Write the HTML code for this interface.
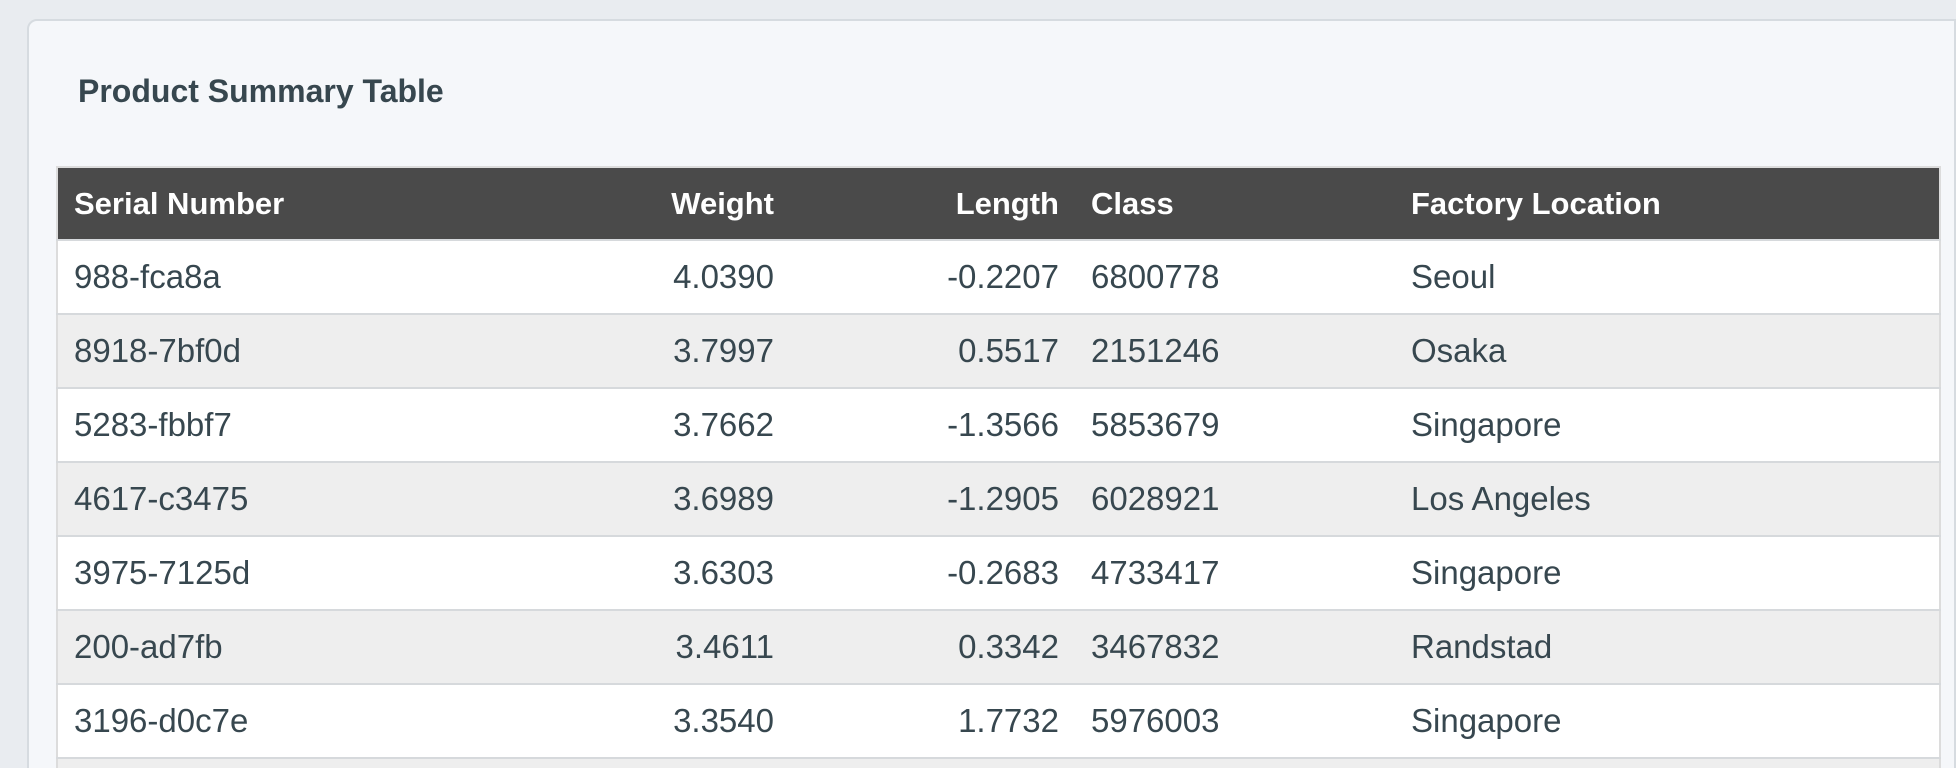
<!DOCTYPE html>
<html><head><meta charset="utf-8"><style>
html,body{margin:0;padding:0;width:1956px;height:768px;overflow:hidden;background:#e9ecf0;font-family:"Liberation Sans",sans-serif;}
#wrap{position:relative;width:1956px;height:768px;overflow:hidden;}
.card{position:absolute;left:27px;top:19px;width:1925px;height:747px;background:#f5f7fa;border:2px solid #d6dbe0;border-radius:10px 0 0 0;}
h1{position:absolute;left:78px;top:73px;margin:0;font-size:32px;font-weight:bold;color:#37474f;}
.tw{position:absolute;left:56px;top:166px;width:1885px;height:602px;overflow:hidden;}
table{width:1885px;border-collapse:collapse;border:2px solid #dcdcdc;table-layout:fixed;}
th{background:#4a4a4a;color:#fff;font-size:31px;font-weight:bold;height:71px;padding:0 16px;text-align:left;}
td{font-size:33px;color:#37474f;height:72px;padding:0 16px;border-top:2px solid #d6d9dc;}
tr:nth-child(even) td{background:#eeeeee;}
tr:nth-child(odd) td{background:#fff;}
.r{text-align:right;}
</style></head><body><div id="wrap">
<div class="card"></div>
<h1>Product Summary Table</h1>
<div class="tw">
<table>
<colgroup><col style="width:500px"><col style="width:233px"><col style="width:285px"><col style="width:320px"><col></colgroup>
<thead><tr><th>Serial Number</th><th class="r">Weight</th><th class="r">Length</th><th>Class</th><th>Factory Location</th></tr></thead>
<tbody>
<tr><td>988-fca8a</td><td class="r">4.0390</td><td class="r">-0.2207</td><td>6800778</td><td>Seoul</td></tr>
<tr><td>8918-7bf0d</td><td class="r">3.7997</td><td class="r">0.5517</td><td>2151246</td><td>Osaka</td></tr>
<tr><td>5283-fbbf7</td><td class="r">3.7662</td><td class="r">-1.3566</td><td>5853679</td><td>Singapore</td></tr>
<tr><td>4617-c3475</td><td class="r">3.6989</td><td class="r">-1.2905</td><td>6028921</td><td>Los Angeles</td></tr>
<tr><td>3975-7125d</td><td class="r">3.6303</td><td class="r">-0.2683</td><td>4733417</td><td>Singapore</td></tr>
<tr><td>200-ad7fb</td><td class="r">3.4611</td><td class="r">0.3342</td><td>3467832</td><td>Randstad</td></tr>
<tr><td>3196-d0c7e</td><td class="r">3.3540</td><td class="r">1.7732</td><td>5976003</td><td>Singapore</td></tr>
<tr><td>&nbsp;</td><td></td><td></td><td></td><td></td></tr>
</tbody>
</table>
</div>
</div></body></html>
